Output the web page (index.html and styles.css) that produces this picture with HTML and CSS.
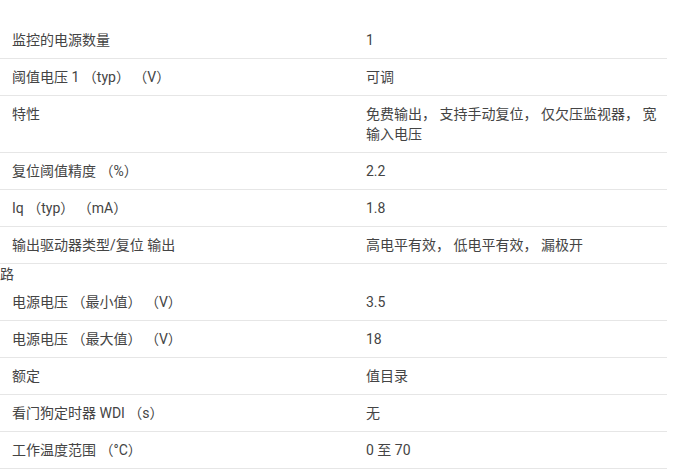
FILE: index.html
```html
<!DOCTYPE html>
<html lang="zh-CN">
<head>
<meta charset="utf-8">
<link rel="stylesheet" href="styles.css">
</head>
<body>
<div class="specs">
  <div class="row"><div class="label">监控的电源数量</div><div class="value">1</div></div>
  <div class="row"><div class="label">阈值电压 1 （typ） （V）</div><div class="value">可调</div></div>
  <div class="row"><div class="label">特性</div><div class="value">免费输出， 支持手动复位， 仅欠压监视器， 宽输入电压</div></div>
  <div class="row"><div class="label">复位阈值精度 （%）</div><div class="value">2.2</div></div>
  <div class="row"><div class="label">Iq （typ） （mA）</div><div class="value">1.8</div></div>
  <div class="row"><div class="label">输出驱动器类型/复位 输出</div><div class="value">高电平有效， 低电平有效， 漏极开</div></div>
  <div class="overflow">路</div>
  <div class="row"><div class="label">电源电压 （最小值） （V）</div><div class="value">3.5</div></div>
  <div class="row"><div class="label">电源电压 （最大值） （V）</div><div class="value">18</div></div>
  <div class="row"><div class="label">额定</div><div class="value">值目录</div></div>
  <div class="row"><div class="label">看门狗定时器 WDI （s）</div><div class="value">无</div></div>
  <div class="row"><div class="label">工作温度范围 （°C）</div><div class="value">0 至 70</div></div>
</div>
</body>
</html>
```

FILE: styles.css
```css
html, body {
  margin: 0;
  padding: 0;
  background: #ffffff;
}

body {
  font-family: Roboto, "Noto Sans CJK SC", sans-serif;
  font-size: 14px;
  line-height: 20px;
  color: #444444;
}

.specs {
  width: 667px;
  padding-top: 22px;
}

.row {
  display: grid;
  grid-template-columns: 354px 313px;
  border-bottom: 1px solid #e6e6e6;
}

.label,
.value {
  padding: 8px 12px;
}

.value {
  padding-right: 8px;
}

.overflow {
  height: 20px;
  padding: 0;
}
```
